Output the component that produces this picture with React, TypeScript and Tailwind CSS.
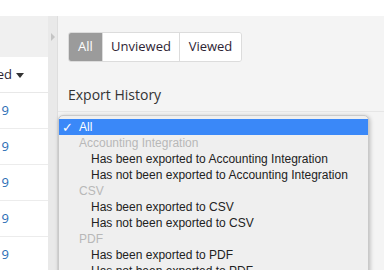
const LEFT_ROWS = ["02/11/2019", "02/08/2019", "02/05/2019", "01/30/2019", "01/24/2019"];

const MENU: { label: string; kind: "selected" | "group" | "item" }[] = [
  { label: "All", kind: "selected" },
  { label: "Accounting Integration", kind: "group" },
  { label: "Has been exported to Accounting Integration", kind: "item" },
  { label: "Has not been exported to Accounting Integration", kind: "item" },
  { label: "CSV", kind: "group" },
  { label: "Has been exported to CSV", kind: "item" },
  { label: "Has not been exported to CSV", kind: "item" },
  { label: "PDF", kind: "group" },
  { label: "Has been exported to PDF", kind: "item" },
  { label: "Has not been exported to PDF", kind: "item" },
];

function Segment({ label, active, width, last }: { label: string; active?: boolean; width: string; last?: boolean }) {
  return (
    <div
      className={`${width} h-full flex items-center justify-center text-[13px] ${
        active ? "bg-[#9b9b9b] text-white" : "bg-white text-[#2e2434]"
      } ${last ? "" : "border-r border-[#dcdcdc]"}`}
    >
      {label}
    </div>
  );
}

export default function App() {
  return (
    <div className="relative w-[384px] h-[270px] overflow-hidden bg-white" style={{ fontFamily: '"Open Sans", sans-serif' }}>
      <div className="h-[16px] bg-white" />
      <div className="flex h-[254px]">
        {/* left list column */}
        <div className="w-[48px] flex flex-col bg-white">
          <div className="h-[41px] bg-[#f0f0f0] shrink-0" />
          <div className="h-[36px] shrink-0 flex items-center justify-end pr-[24px] overflow-hidden whitespace-nowrap border-b border-[#e8e8e8] text-[13px] text-[#2e2434]">
            <span>Unviewed</span>
            <span className="ml-[4px] mt-[1px] shrink-0 w-0 h-0 border-l-[4px] border-r-[4px] border-t-[5px] border-l-transparent border-r-transparent border-t-[#333]" />
          </div>
          {LEFT_ROWS.map((d) => (
            <div
              key={d}
              className="h-[36px] shrink-0 flex items-center justify-end pr-[39px] overflow-hidden whitespace-nowrap border-b border-[#ececec] text-[13px] text-[#2a6db5]"
            >
              {d}
            </div>
          ))}
        </div>

        {/* collapse strip */}
        <div className="w-[10px] bg-[#e9e9e9] border-r border-[#dedede] pt-[17px] pl-[3px]">
          <div className="w-0 h-0 border-t-[4px] border-b-[4px] border-l-[4px] border-t-transparent border-b-transparent border-l-[#c4c4c4]" />
        </div>

        {/* right panel */}
        <div className="flex-1 bg-[#f4f4f4]">
          <div className="pl-[10px] pt-[16px]">
            <div className="flex h-[30px] w-fit rounded-[3px] border border-[#dcdcdc] overflow-hidden">
              <Segment label="All" active width="w-[34px]" />
              <Segment label="Unviewed" width="w-[77px]" />
              <Segment label="Viewed" width="w-[61px]" last />
            </div>
            <div className="mt-[22px] text-[14px] text-[#333]">Export History</div>
          </div>
          <div className="mt-[6px] border-t border-[#e6e6e6]" />
        </div>
      </div>

      {/* native select menu */}
      <div
        className="absolute left-[58px] top-[115px] w-[311px] h-[170px] bg-[#efefef] border border-[#c9c9c9] rounded-t-[5px] shadow-[1px_1px_4px_rgba(0,0,0,0.25)] pt-[3px] text-[12px]"
        style={{ fontFamily: '"Liberation Sans", Arial, sans-serif' }}
      >
        {MENU.map((m) => (
          <div
            key={m.label}
            className={`h-[16px] flex items-center whitespace-nowrap ${
              m.kind === "selected" ? "bg-[#3a88f8] text-white" : m.kind === "group" ? "text-[#b8b8b8]" : "text-[#222]"
            }`}
          >
            <span className="w-[20px] pl-[3px] text-[13px] font-bold leading-none" style={{ fontFamily: '"DejaVu Sans", sans-serif' }}>
              {m.kind === "selected" ? "✓" : ""}
            </span>
            <span className={m.kind === "item" ? "pl-[12px]" : ""}>{m.label}</span>
          </div>
        ))}
      </div>
    </div>
  );
}
